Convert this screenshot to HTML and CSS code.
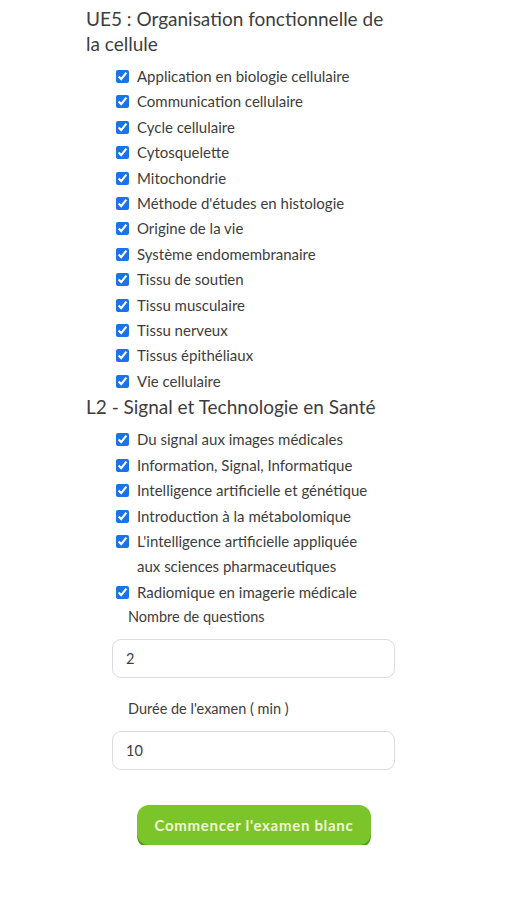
FILE: index.html
```html
<!DOCTYPE html>
<html lang="fr">
<head>
    <meta charset="UTF-8">
    <meta name="viewport" content="width=device-width, initial-scale=1.0">
    <title>Examen blanc</title>
    <link rel="stylesheet" href="styles.css">
</head>
<body>
    <div class="container">
        <div class="ue-group">
            <h3 class="ue-title">UE5 : Organisation fonctionnelle de la cellule</h3>
            <ul class="topic-list">
                <li class="topic"><input type="checkbox" checked><span>Application en biologie cellulaire</span></li>
                <li class="topic"><input type="checkbox" checked><span>Communication cellulaire</span></li>
                <li class="topic"><input type="checkbox" checked><span>Cycle cellulaire</span></li>
                <li class="topic"><input type="checkbox" checked><span>Cytosquelette</span></li>
                <li class="topic"><input type="checkbox" checked><span>Mitochondrie</span></li>
                <li class="topic"><input type="checkbox" checked><span>Méthode d'études en histologie</span></li>
                <li class="topic"><input type="checkbox" checked><span>Origine de la vie</span></li>
                <li class="topic"><input type="checkbox" checked><span>Système endomembranaire</span></li>
                <li class="topic"><input type="checkbox" checked><span>Tissu de soutien</span></li>
                <li class="topic"><input type="checkbox" checked><span>Tissu musculaire</span></li>
                <li class="topic"><input type="checkbox" checked><span>Tissu nerveux</span></li>
                <li class="topic"><input type="checkbox" checked><span>Tissus épithéliaux</span></li>
                <li class="topic"><input type="checkbox" checked><span>Vie cellulaire</span></li>
            </ul>
        </div>

        <div class="ue-group">
            <h3 class="ue-title">L2 - Signal et Technologie en Santé</h3>
            <ul class="topic-list">
                <li class="topic"><input type="checkbox" checked><span>Du signal aux images médicales</span></li>
                <li class="topic"><input type="checkbox" checked><span>Information, Signal, Informatique</span></li>
                <li class="topic"><input type="checkbox" checked><span>Intelligence artificielle et génétique</span></li>
                <li class="topic"><input type="checkbox" checked><span>Introduction à la métabolomique</span></li>
                <li class="topic"><input type="checkbox" checked><span>L'intelligence artificielle appliquée aux sciences pharmaceutiques</span></li>
                <li class="topic"><input type="checkbox" checked><span>Radiomique en imagerie médicale</span></li>
            </ul>
        </div>

        <div class="field">
            <label class="field-label" for="nb-questions">Nombre de questions</label>
            <input class="field-input" id="nb-questions" type="text" value="2">
        </div>

        <div class="field">
            <label class="field-label" for="duree">Durée de l'examen ( min )</label>
            <input class="field-input" id="duree" type="text" value="10">
        </div>

        <div class="actions">
            <button class="start-btn">Commencer l'examen blanc</button>
        </div>
    </div>
</body>
</html>
```

FILE: styles.css
```css
* {
    margin: 0;
    padding: 0;
    box-sizing: border-box;
}

body {
    font-family: Lato, "Noto Sans", sans-serif;
    background: #fff;
    color: #3a3a3a;
}

.container {
    width: 330px;
    margin-left: 86px;
    padding-top: 6px;
}

.ue-title {
    font-size: 19px;
    font-weight: 400;
    line-height: 25px;
    color: #3d3d3d;
    width: 302px;
}

.topic-list {
    list-style: none;
    padding-left: 30px;
    padding-top: 8px;
    width: 292px;
}

.topic {
    display: flex;
    align-items: flex-start;
    font-size: 15px;
    line-height: 25.4px;
    color: #3d3d3d;
}

.topic input {
    width: 13px;
    height: 13px;
    margin: 6px 8px 0 0;
    flex-shrink: 0;
    accent-color: #1a73e8;
}

.field {
    padding-left: 26px;
}

.field-label {
    display: block;
    font-size: 14.5px;
    line-height: 24px;
    color: #3d3d3d;
    padding-left: 16px;
}

.field-input {
    display: block;
    width: 283px;
    height: 39px;
    margin-top: 10px;
    margin-bottom: 19px;
    padding: 0 13px;
    border: 1px solid #dcdcdc;
    border-radius: 9px;
    font-family: inherit;
    font-size: 14.5px;
    color: #3d3d3d;
    background: #fff;
}

.actions {
    padding-left: 51px;
    padding-top: 16px;
}

.start-btn {
    width: 234px;
    height: 40px;
    border: none;
    border-radius: 12px;
    background: #7bc52b;
    box-shadow: 0 3px 0 #5c9a1c;
    color: #eef7d2;
    font-family: inherit;
    font-size: 15px;
    font-weight: 700;
    letter-spacing: 0.7px;
    cursor: pointer;
}
```
